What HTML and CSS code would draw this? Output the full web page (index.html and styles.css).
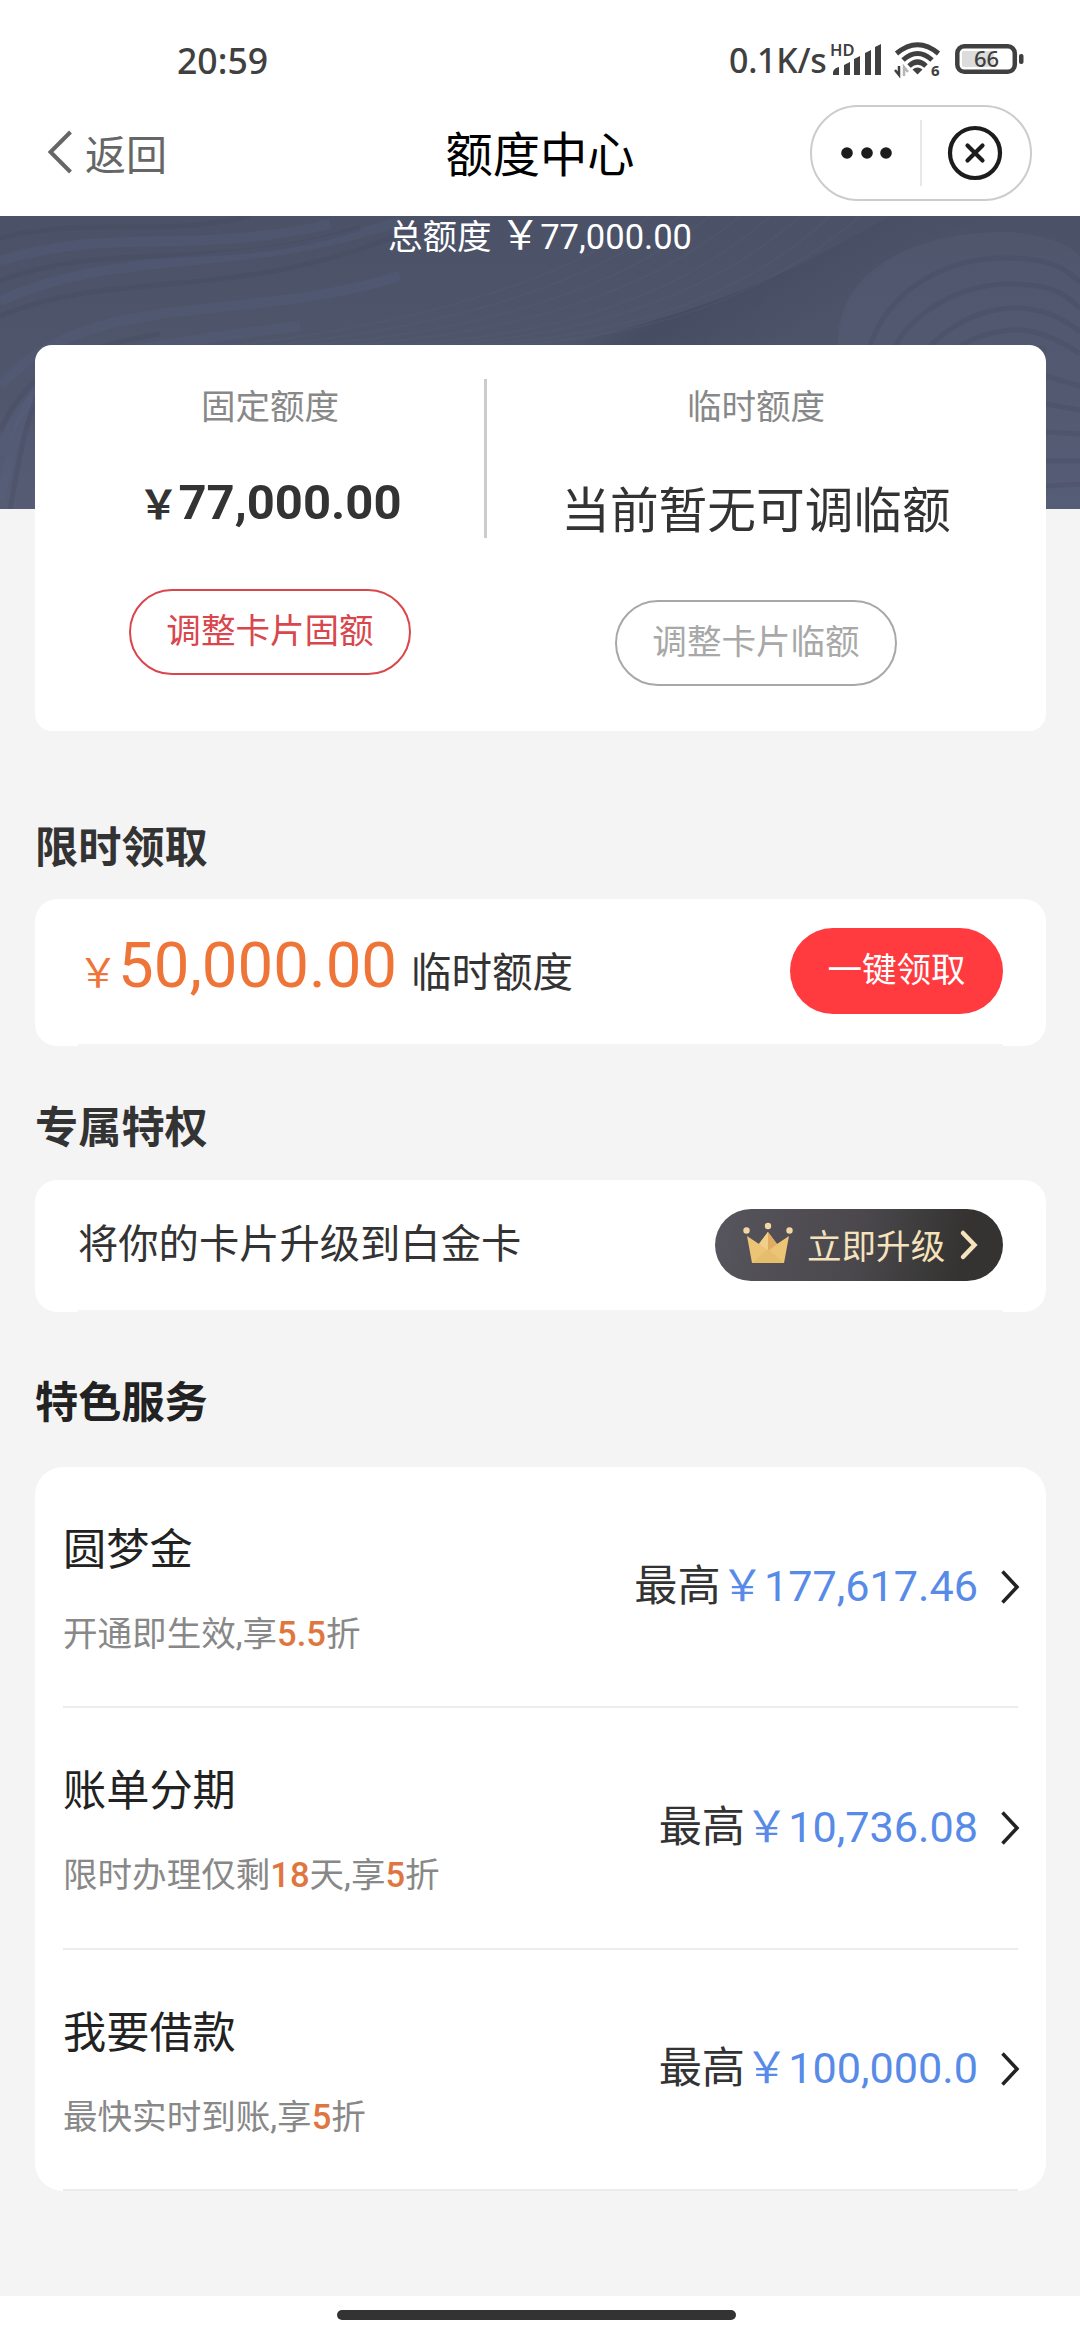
FILE: index.html
```html
<!DOCTYPE html>
<html lang="zh-CN">
<head>
<meta charset="utf-8">
<title>额度中心</title>
<link rel="stylesheet" href="styles.css">
</head>
<body>
<div class="status">
  <span class="clock">20:59</span>
  <div class="status-right">
    <span class="speed">0.1K/s</span>
    <svg class="signal" width="54" height="36" viewBox="0 0 54 36">
      <text x="-1" y="14" class="hd">HD</text>
      <path d="M2 33v-3q1-4 6-5v8zM13 33V23l6-3v13zM23 33V17l6-3v19zM34 33V11l6-3v25zM44 33V5l6-3v31z" fill="#404040"/>
    </svg>
    <svg class="wifi" width="50" height="36" viewBox="0 0 50 36">
      <g fill="none" stroke="#404040" stroke-width="5">
        <path d="M3.500 12.500Q24.500-5 45.500 12.500"/>
        <path d="M10 19Q24.500 6 39 19"/>
        <path d="M16 25Q24.500 17 33 25"/>
      </g>
      <path d="M24.500 33.500l-5-5q5-4 10 0z" fill="#404040"/>
      <path d="M6 25v9l-4-5" stroke="#404040" stroke-width="2.500" fill="none"/>
      <path d="M11 35v-9l4 5" stroke="#b5b5b5" stroke-width="2.500" fill="none"/>
      <text x="38" y="34.500" class="wifi-gen">6</text>
    </svg>
    <svg class="battery" width="70" height="32" viewBox="0 0 70 32">
      <rect x="2.300" y="3.300" width="57.500" height="25.500" rx="7" fill="none" stroke="#404040" stroke-width="4.500"/>
      <rect x="7" y="8" width="32" height="16" rx="2" fill="#dcdcdc"/>
      <rect x="64" y="11" width="4.500" height="10" rx="2" fill="#404040"/>
      <text x="31.500" y="24" text-anchor="middle" class="level">66</text>
    </svg>
  </div>
</div>
<header class="nav">
  <a class="back">
    <svg width="26" height="44" viewBox="0 0 26 44"><path d="M22.500 2L2.500 22l20 20" fill="none" stroke="#666" stroke-width="4"/></svg>
    <span>返回</span>
  </a>
  <h1 class="nav-title">额度中心</h1>
  <div class="capsule">
    <svg class="dots" width="52" height="12" viewBox="0 0 52 12" fill="#1c1c1c"><circle cx="6" cy="6" r="5.800"/><circle cx="26" cy="6" r="5.800"/><circle cx="45" cy="6" r="5.800"/></svg>
    <i class="capsule-line"></i>
    <svg class="close" width="56" height="56" viewBox="0 0 56 56" fill="none" stroke="#1c1c1c" stroke-width="4.200" stroke-linecap="round"><circle cx="28" cy="28" r="25"/><path d="M20.500 20.500l15 15M35.500 20.500l-15 15"/></svg>
  </div>
</header>
<section class="hero">
  <svg class="waves" width="1080" height="293" viewBox="0 0 1080 293" fill="none">
    <defs>
      <linearGradient id="fold" gradientUnits="userSpaceOnUse" x1="700" y1="20" x2="790" y2="130">
        <stop offset="0" stop-color="#43495e" stop-opacity="0"/>
        <stop offset=".3" stop-color="#43495e" stop-opacity=".75"/>
        <stop offset="1" stop-color="#43495e" stop-opacity=".1"/>
      </linearGradient>
    </defs>
    <path d="M890 0C800 50 740 85 560 130L840 140C830 70 910 20 1000 0z" fill="url(#fold)"/>
    <path d="M838 130C835 50 920 15 1010 16Q1060 20 1080 40V293H1046V130z" fill="#59607c" fill-opacity=".3"/>
    <g stroke="#5c6488" stroke-opacity=".22" stroke-width="10">
      <path d="M0 45C110 10 190 40 330 8"/>
      <path d="M0 85C120 30 240 60 400 5"/>
      <path d="M0 170C90 70 240 110 400 60"/>
      <path d="M0 240C30 130 160 130 300 110"/>
      <path d="M0 285C10 240 20 180 60 150"/>
    </g>
    <g stroke="#434a60" stroke-opacity=".3" stroke-width="5">
      <path d="M0 22C90 0 160 22 250 0"/>
      <path d="M0 65C110 22 220 58 360 12"/>
      <path d="M0 100C120 50 240 90 420 10"/>
      <path d="M0 215C30 145 90 130 160 118"/>
      <path d="M10 293C20 240 25 200 50 150"/>
      <path d="M870 130C890 70 950 42 1005 42S1070 58 1080 66"/>
      <path d="M895 130C915 95 960 68 1010 68S1070 84 1080 92"/>
      <path d="M930 130C950 110 980 92 1015 92S1070 108 1080 116"/>
      <path d="M960 130C980 118 1000 114 1020 114S1070 130 1080 138"/>
      <path d="M1046 160L1080 170M1046 188L1080 194M1046 216L1080 218M1046 245L1080 245M1046 270L1080 268"/>
    </g>
    <g stroke="#5a6282" stroke-opacity=".18" stroke-width="2">
      <path d="M230 130C400 110 560 70 650 0M260 130C430 115 580 75 680 0M290 130C460 120 610 80 710 0M330 130C490 122 640 85 740 0M370 130C530 125 670 90 770 0M410 130C560 125 700 90 800 0M450 130C590 125 730 95 830 0M490 130C620 125 750 95 860 0"/>
    </g>
  </svg>
  <p class="total">总额度 <span class="total-yen">￥</span>77,000.00</p>
</section>
<main class="content">
  <section class="card limits">
    <div class="limit">
      <p class="label">固定额度</p>
      <p class="amount"><span class="yen">￥</span>77,000.00</p>
      <a class="pill red">调整卡片固额</a>
    </div>
    <i class="limit-line"></i>
    <div class="limit">
      <p class="label">临时额度</p>
      <p class="notice">当前暂无可调临额</p>
      <a class="pill gray">调整卡片临额</a>
    </div>
  </section>

  <h2 class="heading first">限时领取</h2>
  <section class="card offer">
    <div class="strip">
      <p class="offer-text"><span class="offer-yen">￥</span><span class="offer-num">50,000.00</span><span class="offer-name">临时额度</span></p>
      <a class="claim">一键领取</a>
    </div>
  </section>

  <h2 class="heading second">专属特权</h2>
  <section class="card perk">
    <div class="strip">
      <p class="perk-text">将你的卡片升级到白金卡</p>
      <a class="upgrade">
        <svg class="crown" width="50" height="42" viewBox="0 0 50 42">
          <path d="M4 14l12 8 9-12 9 12 12-8-5 27H9z" fill="#ecc476"/>
          <path d="M25 10l9 12-9 7-9-7z" fill="#e2ab62"/>
          <path d="M25 10v19l-9-7z" fill="#f1cf8b"/>
          <path d="M9 41l16-14 16 14z" fill="#e6bc6d"/>
          <g fill="#f2d7a5"><circle cx="3.500" cy="8.500" r="3.200"/><circle cx="25" cy="4" r="3.200"/><circle cx="46.500" cy="8.500" r="3.200"/></g>
        </svg>
        <span class="upgrade-text">立即升级</span>
        <svg class="go" width="18" height="30" viewBox="0 0 18 30"><path d="M3 3l11.500 12L3 27" fill="none" stroke="#f6e2bd" stroke-width="4.500" stroke-linecap="round"/></svg>
      </a>
    </div>
  </section>

  <h2 class="heading third">特色服务</h2>
  <section class="card services">
    <div class="service">
      <div class="service-info"><h3>圆梦金</h3><p>开通即生效,享<b>5.5</b>折</p></div>
      <div class="quota">最高<em>￥177,617.46</em><svg width="18" height="34" viewBox="0 0 18 34"><path d="M1.500 1.500L16 17 1.500 32.500"/></svg></div>
    </div>
    <div class="service">
      <div class="service-info"><h3>账单分期</h3><p>限时办理仅剩<b>18</b>天,享<b>5</b>折</p></div>
      <div class="quota">最高<em>￥10,736.08</em><svg width="18" height="34" viewBox="0 0 18 34"><path d="M1.500 1.500L16 17 1.500 32.500"/></svg></div>
    </div>
    <div class="service">
      <div class="service-info"><h3>我要借款</h3><p>最快实时到账,享<b>5</b>折</p></div>
      <div class="quota">最高<em>￥100,000.0</em><svg width="18" height="34" viewBox="0 0 18 34"><path d="M1.500 1.500L16 17 1.500 32.500"/></svg></div>
    </div>
  </section>
</main>
<footer class="home"><i></i></footer>
</body>
</html>
```
FILE: styles.css
```css
* { box-sizing: border-box; margin: 0; padding: 0; }
body {
  width: 1080px;
  height: 2340px;
  display: flex;
  flex-direction: column;
  overflow: hidden;
  background: #f4f4f4;
  color: #333;
  font-family: Roboto, "Noto Sans CJK SC", sans-serif;
  font-size: 34.56px;
}
svg { display: block; flex: none; overflow: visible; }
i { display: block; flex: none; }

/* status bar */
.status {
  height: 90px;
  padding: 36px 55px 0 177px;
  display: flex;
  justify-content: space-between;
  background: #fff;
  color: #404040;
  font-family: "Noto Sans", sans-serif;
  font-size: 35.6px;
  font-weight: 500;
  line-height: 48px;
}
.status-right { display: flex; }
.speed { width: 102px; font-size: 34px; letter-spacing: -.3px; white-space: nowrap; }
.signal { margin-top: 6px; }
.wifi { margin: 5px 0 0 8px; }
.battery { margin: 7px 0 0 12px; }
.hd { font: 600 16.5px "Noto Sans", sans-serif; fill: #404040; }
.wifi-gen { font: 700 15px "Noto Sans", sans-serif; fill: #404040; }
.level { font: 500 22px "Noto Sans", sans-serif; fill: #404040; }

/* navigation */
.nav {
  height: 126px;
  padding: 0 48px;
  display: grid;
  grid-template-columns: 1fr auto 1fr;
  background: #fff;
}
.back { display: flex; gap: 11px; padding-top: 40px; color: #666; font-size: 41px; line-height: 52px; }
.nav-title { padding-top: 36px; font-size: 47.3px; font-weight: 400; line-height: 60px; color: #000; }
.capsule {
  justify-self: end;
  width: 222px;
  height: 96px;
  margin: 15px 0 0;
  border: 2px solid #ccc;
  border-radius: 48px;
  display: flex;
  align-items: center;
}
.dots { margin-left: 29px; }
.capsule-line { width: 2px; height: 66px; margin-left: 27px; background: #e8e8e8; }
.close { margin-left: 25px; }

/* hero */
.hero { position: relative; height: 293px; flex: none; overflow: hidden; background: linear-gradient(#4b5267, #50576d 60%, #555c74); }
.waves { position: absolute; left: 0; top: 0; }
.total { position: relative; line-height: 42px; text-align: center; color: #fff; }
.total-yen { font-size: 40px; line-height: 1; }

.content { flex: 1; margin-top: -164px; padding: 0 34px 0 35px; position: relative; }
.card { background: #fff; border-radius: 22px; }

/* limits */
.limits { height: 386px; padding: 0 21px; display: flex; border-radius: 17px; }
.limit { display: flex; flex-direction: column; align-items: center; padding-top: 38px; flex: 538; }
.limit:first-child { flex: 428; }
.limit-line { width: 3px; height: 159px; margin-top: 34px; background: #ccc; }
.label { line-height: 48px; color: #888; }
.amount { margin-top: 42px; margin-bottom: -1px; font-size: 49px; font-weight: 700; line-height: 60px; }
.yen { font-size: 40px; line-height: 1; }
.notice { margin-top: 51px; margin-bottom: 1px; font-size: 48.7px; line-height: 60px; }
.pill {
  width: 282px;
  height: 86px;
  margin-top: 57px;
  border: 2px solid;
  border-radius: 43px;
  text-align: center;
  line-height: 80px;
}
.red { color: #d9464c; }
.gray { color: #a8a8a8; }

.heading { font-size: 43.2px; font-weight: 700; line-height: 60px; }
.first { margin-top: 88px; margin-bottom: 20px; }
.second { margin-top: 53px; margin-bottom: 21px; }
.third { margin-top: 62px; margin-bottom: 33px; color: #222; }

/* offer and perk rows */
.offer { height: 147px; padding: 0 43px; }
.perk { height: 132px; padding: 0 43px; }
.strip { height: 100%; border-bottom: 2px solid #f5f5f5; display: flex; align-items: center; justify-content: space-between; }
.offer-text { padding-bottom: 3px; line-height: 70px; display: flex; align-items: baseline; }
.offer-yen, .offer-num { color: #ee7438; }
.offer-yen { font-size: 40px; }
.offer-num { font-size: 63.5px; }
.offer-name { margin-left: 14px; font-size: 40.5px; }
.claim {
  width: 213px;
  height: 86px;
  margin-bottom: 2px;
  border-radius: 43px;
  background: #ff3b3f;
  color: #fff;
  text-align: center;
  line-height: 84px;
}
.perk-text { font-size: 40.3px; line-height: 60px; }
.upgrade {
  width: 288px;
  height: 72px;
  padding-left: 28px;
  border-radius: 36px;
  display: flex;
  align-items: center;
  background: linear-gradient(100deg, #57555d, #4a484c 50%, #343331 85%);
  color: #f6e2bd;
}
.upgrade-text { margin-bottom: 3px; }
.crown { margin: -4px 14px 0 0; }
.go { margin-left: 15px; }

/* services */
.services { height: 724px; padding: 0 28px; border-radius: 28px; display: flex; flex-direction: column; }
.service {
  flex: 1;
  border-bottom: 2px solid #ececec;
  display: flex;
  align-items: center;
  justify-content: space-between;
}
.service-info { padding-top: 6px; }
.service h3 { font-size: 43.2px; font-weight: 400; line-height: 60px; color: #222; }
.service p { margin-top: 29px; line-height: 48px; color: #888; }
.service b { font-weight: 500; color: #e0763f; }
.quota { display: flex; align-items: center; font-size: 43.2px; line-height: 60px; }
.quota em { font-style: normal; color: #588be8; }
.quota svg { margin-left: 23px; margin-right: -1px; fill: none; stroke: #222; stroke-width: 3.5; }

.home { height: 44px; flex: none; background: #fff; padding: 14px 0 0 337px; }
.home i { width: 399px; height: 10px; border-radius: 5px; background: #333; }
```
